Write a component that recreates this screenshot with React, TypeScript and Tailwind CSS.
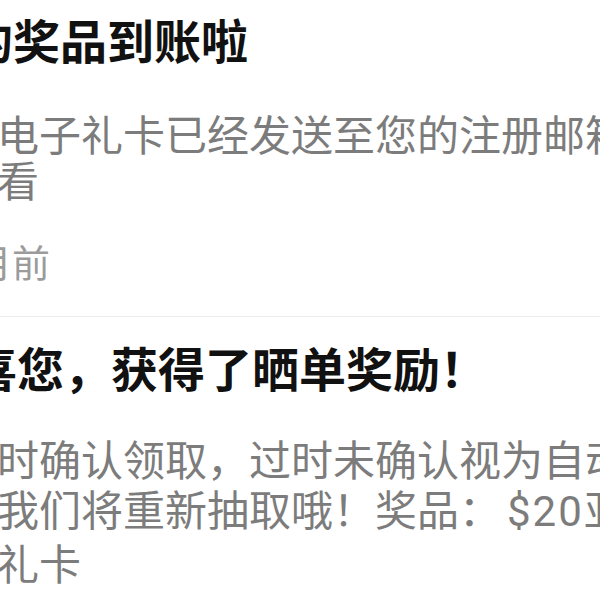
const cjk = 'font-["Noto_Sans_CJK_SC","Noto_Sans",sans-serif]';

type Notice = {
  title: string;
  lines: React.ReactNode[];
  time?: string;
};

const notices: Notice[] = [
  {
    title: '您的奖品到账啦',
    lines: ['您的电子礼卡已经发送至您的注册邮箱，请', '请查看'],
    time: '1个月前',
  },
  {
    title: '恭喜您，获得了晒单奖励！',
    lines: [
      '请及时确认领取，过时未确认视为自动放弃',
      <>
        弃，我们将重新抽取哦！奖品：
        <span className="ml-[6px] font-['Roboto',sans-serif] tracking-[2px]">$20</span>
        亚马逊
      </>,
      '马逊礼卡',
    ],
  },
];

export default function App() {
  return (
    <div className={`w-[600px] h-[600px] overflow-hidden bg-white ${cjk}`}>
      <div className="-ml-[81px] w-[800px] whitespace-nowrap">
        {/* first notice */}
        <div className="pt-[11px] border-b border-[#ececec] pb-[35px]">
          <div className="text-[47px] leading-[56px] font-bold text-[#111]">{notices[0].title}</div>
          <div className="mt-[43px] -ml-[6px] text-[42px] leading-[46px] text-[#7c7c7c]">
            {notices[0].lines.map((l, i) => (
              <div key={i}>{l}</div>
            ))}
          </div>
          <div className="mt-[39px] -ml-[4px] text-[38px] leading-[40px] text-[#9b9b9b]">{notices[0].time}</div>
        </div>

        {/* second notice */}
        <div className="pt-[22px]">
          <div className="ml-[4px] text-[47px] leading-[56px] font-bold text-[#111]">{notices[1].title}</div>
          <div className="mt-[38px] -ml-[6px] text-[42px] leading-[50px] text-[#7c7c7c]">
            {notices[1].lines.map((l, i) => (
              <div key={i}>{l}</div>
            ))}
          </div>
        </div>
      </div>
    </div>
  );
}
